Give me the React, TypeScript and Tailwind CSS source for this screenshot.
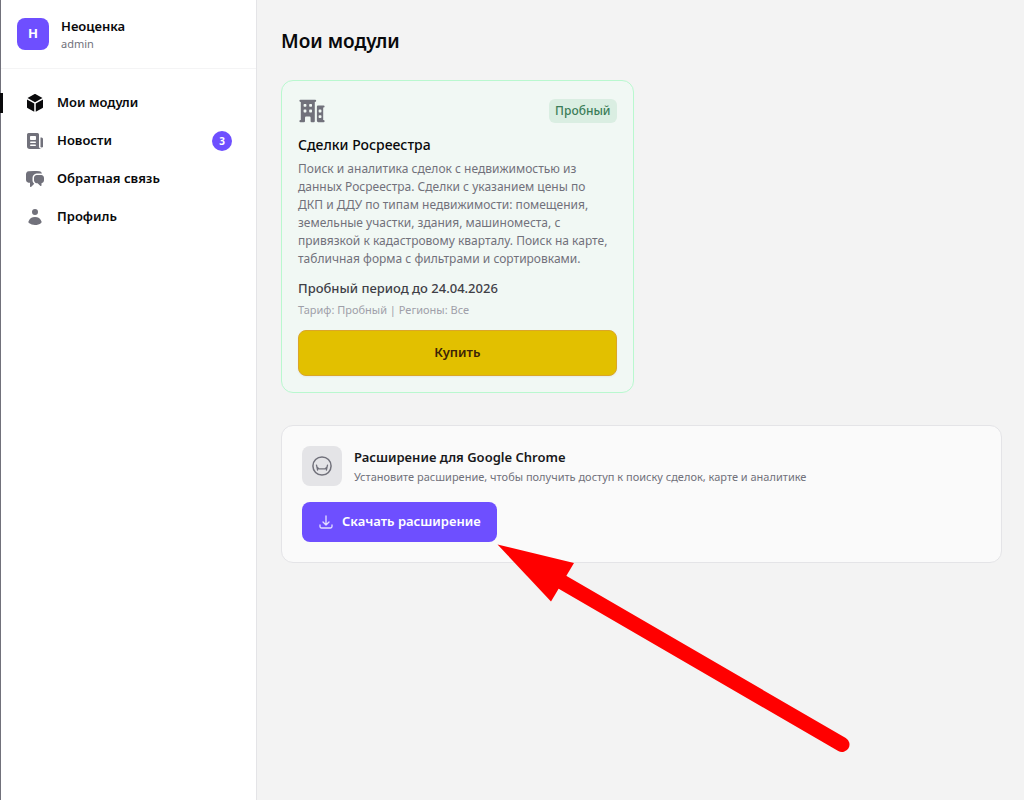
import React from "react";
import {
  HiMiniBuildingOffice2,
  HiMiniChatBubbleLeftRight,
  HiMiniCube,
  HiMiniNewspaper,
  HiMiniUser,
  HiOutlineArrowDownTray
} from "react-icons/hi2";
import type { IconType } from "react-icons";
import { clsx } from "clsx";

interface NavItem {
  label: string;
  icon: IconType;
  active?: boolean;
  count?: number;
}

const navItems: NavItem[] = [
  { label: "Мои модули", icon: HiMiniCube, active: true },
  { label: "Новости", icon: HiMiniNewspaper, count: 3 },
  { label: "Обратная связь", icon: HiMiniChatBubbleLeftRight },
  { label: "Профиль", icon: HiMiniUser }
];

const NavLink: React.FC<{ item: NavItem }> = ({ item }) => {
  const Icon = item.icon;
  return (
    <li className="relative">
      {item.active && <span className="absolute -left-[9px] inset-y-2 w-[3px] bg-zinc-950" aria-hidden="true" />}
      <a
        href="#"
        className="flex h-9 items-center gap-3 px-4 text-[13px] font-semibold text-zinc-950"
        aria-current={item.active ? "page" : undefined}
      >
        <Icon className={clsx("size-5 shrink-0", item.active ? "text-zinc-950" : "text-zinc-500")} aria-hidden="true" />
        <span className="truncate">{item.label}</span>
        {item.count && (
          <span className="ml-auto flex size-5 items-center justify-center rounded-full bg-[#6e4fff] text-[10px] font-bold text-white">
            {item.count}
          </span>
        )}
      </a>
    </li>
  );
};

const Sidebar: React.FC = () => (
  <aside className="w-[257px] shrink-0 border-l border-r border-l-zinc-500 border-r-zinc-200 bg-white">
    <div className="flex h-[69px] items-center gap-3 border-b border-zinc-100 px-4">
      <div className="flex size-8 items-center justify-center rounded-lg bg-[#6e4fff] text-[13px] font-bold text-white">Н</div>
      <div>
        <p className="text-[13px] leading-5 font-semibold text-zinc-950">Неоценка</p>
        <p className="text-[11px] leading-4 text-zinc-500">admin</p>
      </div>
    </div>
    <nav className="px-2 pt-4">
      <ul className="flex flex-col gap-0.5">
        {navItems.map((item) => (
          <NavLink key={item.label} item={item} />
        ))}
      </ul>
    </nav>
  </aside>
);

const ModuleCard: React.FC = () => (
  <article className="rounded-xl border border-green-200 bg-[#f1f8f4] p-4">
    <div className="flex items-center justify-between">
      <HiMiniBuildingOffice2 className="size-7 text-zinc-500" aria-hidden="true" />
      <span className="rounded-md bg-[#daeee2] px-1.5 text-xs leading-6 font-medium text-[#3b7d58]">Пробный</span>
    </div>
    <h2 className="mt-2 text-sm leading-6 font-medium text-zinc-950">Сделки Росреестра</h2>
    <p className="mt-[3px] pr-1.5 text-xs leading-[18px] text-zinc-500">
      Поиск и аналитика сделок с недвижимостью из данных Росреестра. Сделки с указанием цены по ДКП и ДДУ по типам
      недвижимости: помещения, земельные участки, здания, машиноместа, с привязкой к кадастровому кварталу. Поиск на
      карте, табличная форма с фильтрами и сортировками.
    </p>
    <p className="mt-2.5 text-[13px] leading-5 font-medium text-zinc-700">Пробный период до 24.04.2026</p>
    <p className="mt-1 text-[11px] leading-4 text-zinc-400">Тариф: Пробный | Регионы: Все</p>
    <button
      type="button"
      className="mt-3 h-[46px] w-full rounded-lg border border-[#dba628] bg-[#e2c000] text-[13px] font-semibold text-[#3d2407] shadow-xs"
    >
      Купить
    </button>
  </article>
);

const ExtensionPanel: React.FC = () => (
  <section className="mt-8 rounded-xl border border-zinc-200 bg-zinc-50 p-5">
    <div className="flex items-center gap-3">
      <div className="flex size-10 shrink-0 items-center justify-center rounded-lg bg-zinc-200 text-zinc-500">
        <svg className="size-5" viewBox="0 0 20 20" fill="none" stroke="currentColor" aria-hidden="true">
          <circle cx="10" cy="10" r="9.1" strokeWidth="1.5" />
          <path
            d="M4.500 9.200 5.600 14M15.500 9.200 14.400 14M4.900 11 6.800 12.800H13.200L15.100 11"
            strokeWidth="1.3"
            strokeLinecap="round"
            strokeLinejoin="round"
          />
        </svg>
      </div>
      <div>
        <h2 className="text-[13px] leading-5 font-semibold text-zinc-900">Расширение для Google Chrome</h2>
        <p className="mt-0.5 text-[11px] leading-4 text-zinc-500">
          Установите расширение, чтобы получить доступ к поиску сделок, карте и аналитике
        </p>
      </div>
    </div>
    <a
      href="#"
      className="mt-4 inline-flex h-10 items-center gap-2 rounded-lg bg-[#6e4fff] px-4 text-[13px] font-semibold text-white"
    >
      <HiOutlineArrowDownTray className="size-4 stroke-2 text-white/80" aria-hidden="true" />
      Скачать расширение
    </a>
  </section>
);

export default function App() {
  return (
    <div className="relative flex min-h-screen bg-[#f3f3f3] font-['Noto_Sans','Open_Sans',sans-serif]">
      <Sidebar />
      <main className="min-w-0 flex-1 py-6 pr-[22px] pl-6">
        <h1 className="text-[19px] leading-[34px] font-semibold text-zinc-950">Мои модули</h1>
        <div className="mt-[22px] grid grid-cols-2 gap-4">
          <ModuleCard />
        </div>
        <ExtensionPanel />
      </main>

      {/* Arrow pointing at the download button */}
      <svg
        className="pointer-events-none absolute top-[544px] left-[497px] h-[210px] w-[354px]"
        viewBox="497 544 354 210"
        aria-hidden="true"
      >
        <path d="M562 582 842 744.500" stroke="#ff0000" strokeWidth="15" strokeLinecap="round" />
        <path d="M497.500 544.500 574 563 551 601.500Z" fill="#ff0000" />
      </svg>
    </div>
  );
}
